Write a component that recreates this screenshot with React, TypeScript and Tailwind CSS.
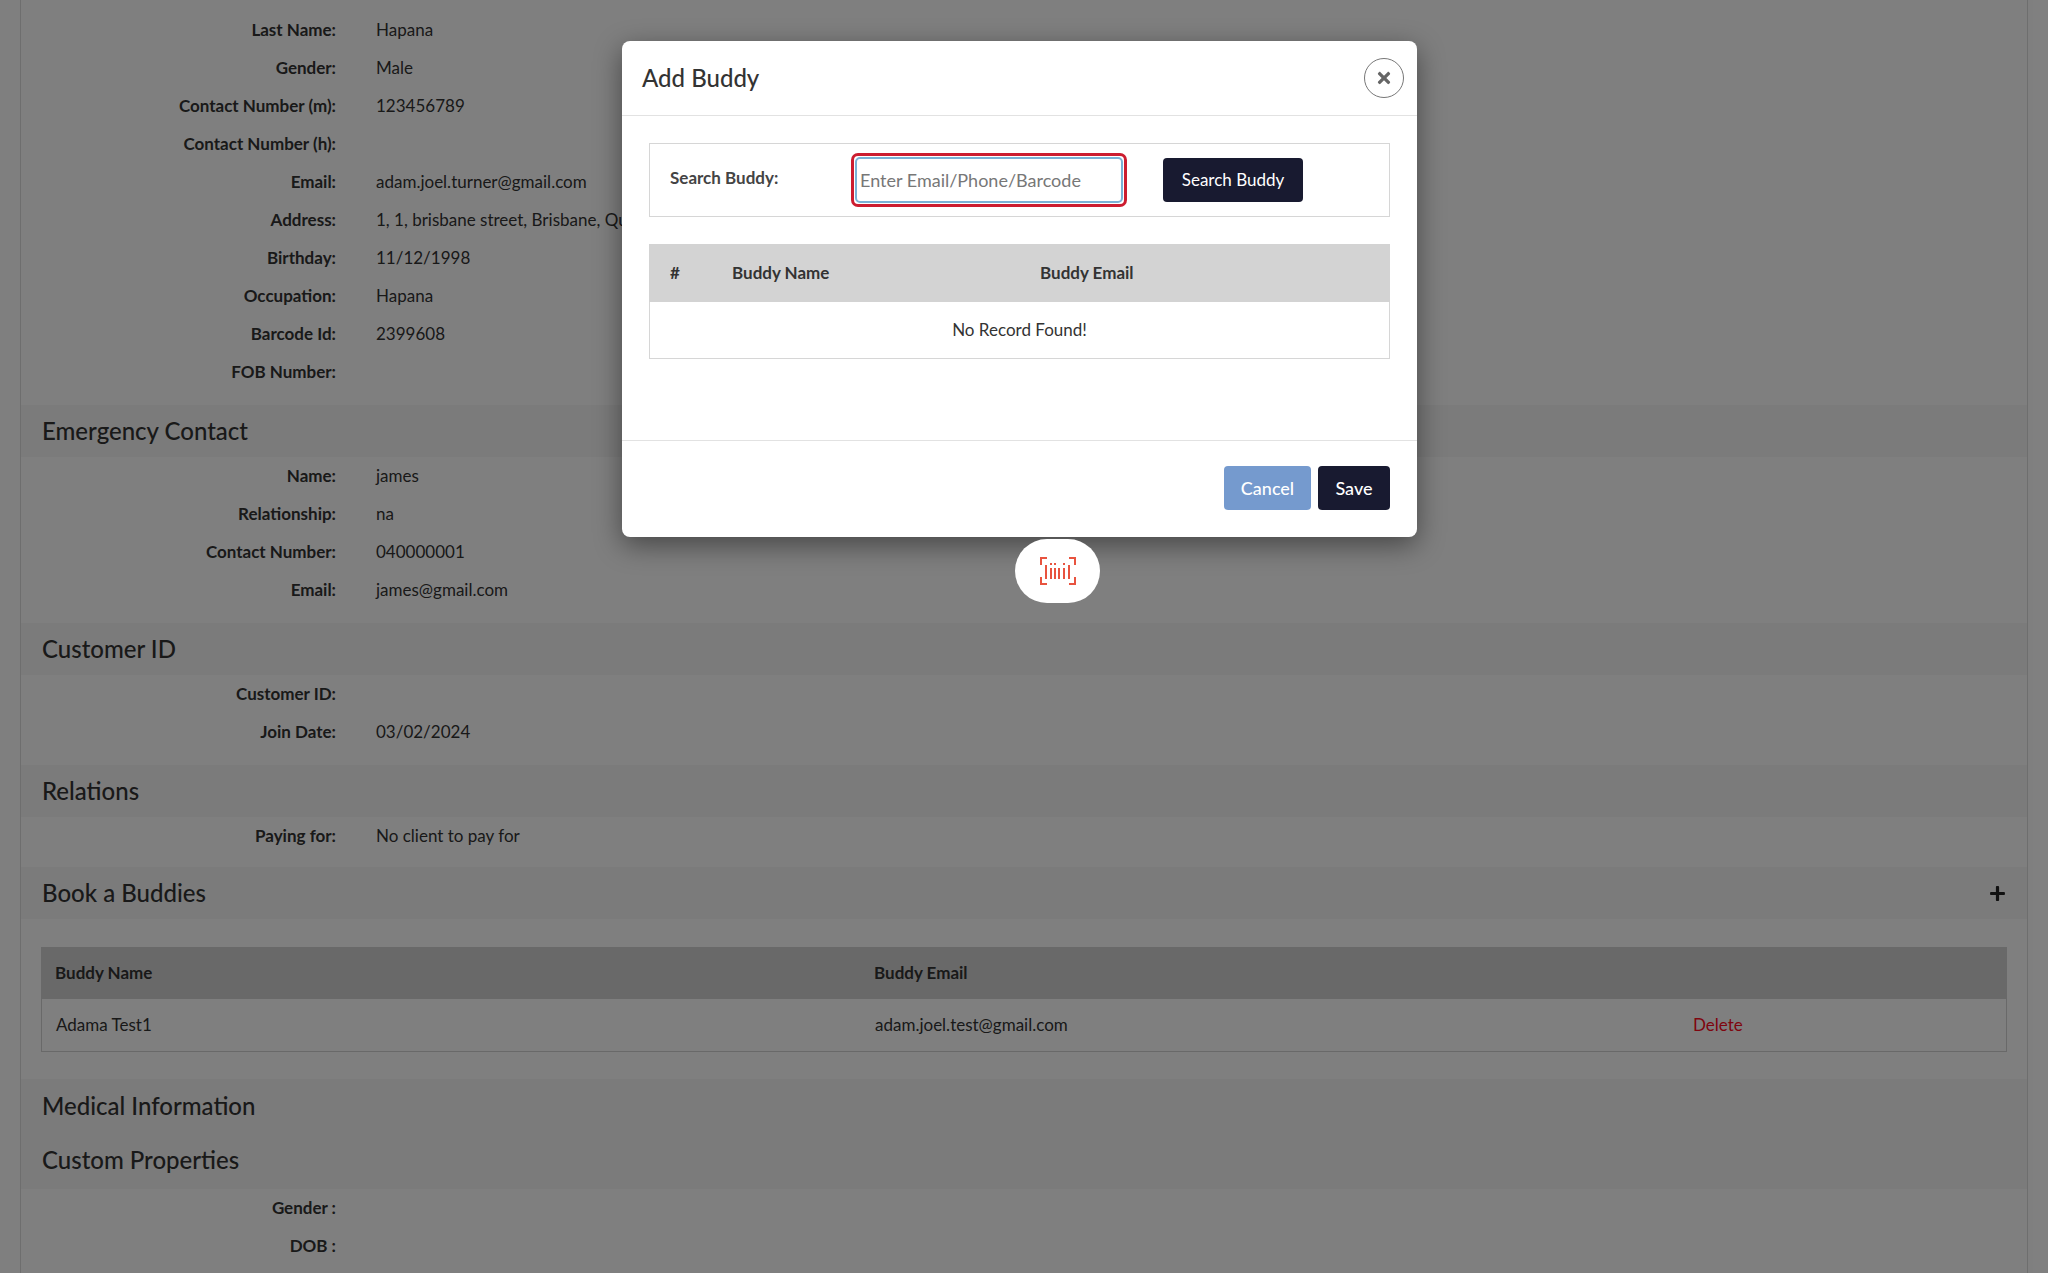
import { FaPlus, FaTimes } from "react-icons/fa";

const personal = [
  ["Last Name:", "Hapana"],
  ["Gender:", "Male"],
  ["Contact Number (m):", "123456789"],
  ["Contact Number (h):", ""],
  ["Email:", "adam.joel.turner@gmail.com"],
  ["Address:", "1, 1, brisbane street, Brisbane, Queensland, 4000"],
  ["Birthday:", "11/12/1998"],
  ["Occupation:", "Hapana"],
  ["Barcode Id:", "2399608"],
  ["FOB Number:", ""],
];

const emergency = [
  ["Name:", "james"],
  ["Relationship:", "na"],
  ["Contact Number:", "040000001"],
  ["Email:", "james@gmail.com"],
];

const customer = [
  ["Customer ID:", ""],
  ["Join Date:", "03/02/2024"],
];

const Row = ({ label, value }: { label: string; value: string }) => (
  <div className="flex h-[38px] items-center whitespace-nowrap text-[17px]">
    <div className="w-[315px] text-right font-bold text-[#333]">{label}</div>
    <div className="ml-[40px] text-[#333]">{value}</div>
  </div>
);

const Rows = ({ items }: { items: string[][] }) => (
  <div>
    {items.map(([label, value]) => (
      <Row key={label} label={label} value={value} />
    ))}
  </div>
);

const Band = ({ title }: { title: string }) => (
  <div className="flex h-[52px] items-center bg-[#f6f6f6] px-[21px] text-[24px] font-medium text-[#333]">
    {title}
  </div>
);

const BarcodeIcon = () => (
  <svg width="38" height="30" viewBox="0 0 38 30" fill="none" stroke="#e8533f" strokeWidth="2">
    <path d="M2 9V2h6M30 2h6v7M2 21v7h6M30 28h6v-7" />
    <path d="M7 9v14M12 12v11M16 12v11M20 12v11M25 12v11M30 9v14" />
    <path d="M12 7v2M16 7v2M25 7v2" />
  </svg>
);

export default function App() {
  return (
    <div className="relative h-[1273px] w-full overflow-hidden bg-white font-['Lato',sans-serif]">
      <div className="mx-[20px] h-full border-x border-[#dddddd] pt-[11px]">
        <Rows items={personal} />
        <div className="mt-[14px]">
          <Band title="Emergency Contact" />
        </div>
        <Rows items={emergency} />
        <div className="mt-[14px]">
          <Band title="Customer ID" />
        </div>
        <Rows items={customer} />
        <div className="mt-[14px]">
          <Band title="Relations" />
        </div>
        <Rows items={[["Paying for:", "No client to pay for"]]} />
        <div className="mt-[12px]">
          <div className="flex h-[52px] items-center justify-between bg-[#f6f6f6] px-[21px] text-[24px] font-medium text-[#333]">
            <span>Book a Buddies</span>
            <FaPlus className="text-[17px] text-[#222]" />
          </div>
        </div>
        <div className="mx-[20px] mt-[28px] text-[17px] text-[#333]">
          <div className="flex h-[52px] items-center bg-[#d3d3d3] px-[14px] font-bold">
            <div className="w-[819px]">Buddy Name</div>
            <div>Buddy Email</div>
          </div>
          <div className="flex h-[53px] items-center border border-t-0 border-[#d3d3d3] px-[14px]">
            <div className="w-[819px]">Adama Test1</div>
            <div className="w-[818px]">adam.joel.test@gmail.com</div>
            <div className="text-[#ff0a20]">Delete</div>
          </div>
        </div>
        <div className="mt-[27px] bg-[#f6f6f6] px-[21px] pb-[2px] text-[24px] font-medium text-[#333]">
          <div className="flex h-[54px] items-center">Medical Information</div>
          <div className="flex h-[54px] items-center">Custom Properties</div>
        </div>
        <Rows
          items={[
            ["Gender :", ""],
            ["DOB :", ""],
          ]}
        />
      </div>

      <div className="absolute inset-0 flex justify-center bg-black/50 pr-[9px] pt-[41px]">
        <div className="flex h-[496px] w-[795px] flex-col rounded-[8px] bg-white shadow-[0_8px_28px_rgba(0,0,0,0.45)]">
          <div className="flex h-[75px] shrink-0 items-center justify-between border-b border-[#e2e2e2] pl-[20px] pr-[13px]">
            <h2 className="text-[24px] font-medium text-[#333]">Add Buddy</h2>
            <button
              type="button"
              aria-label="close"
              className="flex h-[40px] w-[40px] items-center justify-center rounded-full border border-[#777] text-[#666]"
            >
              <FaTimes className="text-[18px]" />
            </button>
          </div>
          <div className="flex-1 px-[27px] pt-[27px] text-[17px] text-[#333]">
            <div className="flex h-[74px] items-center border border-[#d6d6d6]">
              <label className="ml-[20px] w-[181px] pb-[4px] font-bold text-[#444]">Search Buddy:</label>
              <div className="rounded-[7px] border-[3px] border-[#cc1d30] p-[1px]">
                <input
                  readOnly
                  placeholder="Enter Email/Phone/Barcode"
                  className="h-[46px] w-[268px] rounded-[5px] border-2 border-[#7ab2d6] px-[3px] text-[18px] outline-none placeholder:text-[#777]"
                />
              </div>
              <button type="button" className="ml-[36px] h-[44px] w-[140px] rounded-[4px] bg-[#181a30] text-[17px] text-white">
                Search Buddy
              </button>
            </div>
            <div className="mt-[27px] flex h-[58px] items-center bg-[#d3d3d3] font-bold">
              <div className="ml-[21px] w-[62px]">#</div>
              <div className="w-[308px]">Buddy Name</div>
              <div>Buddy Email</div>
            </div>
            <div className="flex h-[57px] items-center justify-center border border-t-0 border-[#d6d6d6]">
              No Record Found!
            </div>
          </div>
          <div className="flex h-[97px] shrink-0 items-start justify-end gap-[7px] border-t border-[#e2e2e2] pr-[27px] pt-[25px] text-[18px] font-medium text-white">
            <button type="button" className="h-[44px] w-[87px] rounded-[4px] bg-[#759ace]">
              Cancel
            </button>
            <button type="button" className="h-[44px] w-[72px] rounded-[4px] bg-[#181a30]">
              Save
            </button>
          </div>
        </div>
      </div>

      <div className="absolute left-[1015px] top-[539px] flex h-[64px] w-[85px] items-center justify-center rounded-[32px] bg-white">
        <BarcodeIcon />
      </div>
    </div>
  );
}
